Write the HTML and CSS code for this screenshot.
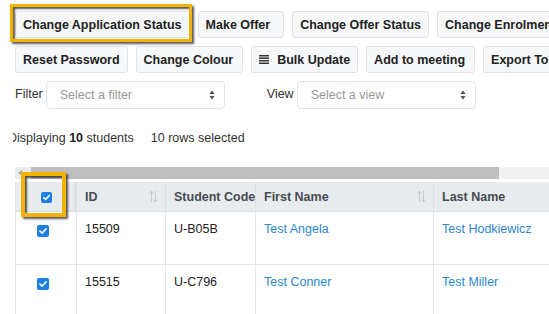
FILE: index.html
```html
<!DOCTYPE html>
<html lang="en">
<head>
<meta charset="utf-8">
<title>Students</title>
<link rel="stylesheet" href="styles.css">
</head>
<body>
<div class="page">
  <div class="toolbar">
    <div class="btn-row">
      <button class="btn btn-focus">Change Application Status<span class="frame frame-btn"></span></button>
      <button class="btn btn-pad-lg">Make Offer</button>
      <button class="btn">Change Offer Status</button>
      <button class="btn">Change Enrolment Status</button>
    </div>
    <div class="btn-row">
      <button class="btn">Reset Password</button>
      <button class="btn btn-pad-sm">Change Colour</button>
      <button class="btn btn-icon">
        <svg class="ico-justify" width="10" height="9" viewBox="0 0 10 9"><rect x="0" y="0" width="10" height="1.5" fill="#333"/><rect x="0" y="2.5" width="10" height="1.5" fill="#333"/><rect x="0" y="5" width="10" height="1.5" fill="#333"/><rect x="0" y="7.5" width="10" height="1.5" fill="#333"/></svg>
        Bulk Update
      </button>
      <button class="btn btn-pad-sm">Add to meeting</button>
      <button class="btn">Export To Excel</button>
    </div>
  </div>

  <div class="filters">
    <div class="field field-filter">
      <span class="field-label">Filter</span>
      <div class="select">
        <span class="placeholder">Select a filter</span>
        <svg class="caret" width="6" height="10" viewBox="0 0 6 10"><path d="M3 0.5 L5.6 4 H0.4 Z M3 9.5 L5.6 6 H0.4 Z" fill="#555"/></svg>
      </div>
    </div>
    <div class="field">
      <span class="field-label">View</span>
      <div class="select">
        <span class="placeholder">Select a view</span>
        <svg class="caret" width="6" height="10" viewBox="0 0 6 10"><path d="M3 0.5 L5.6 4 H0.4 Z M3 9.5 L5.6 6 H0.4 Z" fill="#555"/></svg>
      </div>
    </div>
  </div>

  <div class="summary">
    <div class="summary-clip"><span class="summary-text">Displaying <b>10</b> students</span></div>
    <span class="summary-selected">10 rows selected</span>
  </div>

  <div class="hscroll">
    <span class="hs-btn"><svg width="4" height="6" viewBox="0 0 4 6"><path d="M0 3 L4 0 V6 Z" fill="#a8a8a8"/></svg></span>
    <span class="hs-thumb"></span>
  </div>

  <div class="grid">
    <div class="th th-check">
      <span class="check check-sm"><svg viewBox="0 0 12 12"><path d="M3 6.2 L5.1 8.2 L9 3.9" fill="none" stroke="#fff" stroke-width="1.7" stroke-linecap="round" stroke-linejoin="round"/></svg></span>
      <span class="frame frame-check"></span>
    </div>
    <div class="th">ID<svg class="sort" width="9" height="13" viewBox="0 0 9 13"><path d="M2.5 12 V1.5 M0.5 3.5 L2.5 1.2 L4.5 3.5 M6.5 1 V11.5 M4.5 9.5 L6.5 11.8 L8.5 9.5" fill="none" stroke="#c4c8cc" stroke-width="1"/></svg></div>
    <div class="th">Student Code</div>
    <div class="th">First Name<svg class="sort" width="9" height="13" viewBox="0 0 9 13"><path d="M2.5 12 V1.5 M0.5 3.5 L2.5 1.2 L4.5 3.5 M6.5 1 V11.5 M4.5 9.5 L6.5 11.8 L8.5 9.5" fill="none" stroke="#c4c8cc" stroke-width="1"/></svg></div>
    <div class="th">Last Name</div>

    <div class="td td-check"><span class="check"><svg viewBox="0 0 12 12"><path d="M3 6.2 L5.1 8.2 L9 3.9" fill="none" stroke="#fff" stroke-width="1.7" stroke-linecap="round" stroke-linejoin="round"/></svg></span></div>
    <div class="td">15509</div>
    <div class="td">U-B05B</div>
    <div class="td"><a class="link" href="#">Test Angela</a></div>
    <div class="td"><a class="link" href="#">Test Hodkiewicz</a></div>

    <div class="td td-check"><span class="check"><svg viewBox="0 0 12 12"><path d="M3 6.2 L5.1 8.2 L9 3.9" fill="none" stroke="#fff" stroke-width="1.7" stroke-linecap="round" stroke-linejoin="round"/></svg></span></div>
    <div class="td">15515</div>
    <div class="td">U-C796</div>
    <div class="td"><a class="link" href="#">Test Conner</a></div>
    <div class="td"><a class="link" href="#">Test Miller</a></div>
  </div>
</div>
</body>
</html>
```

FILE: styles.css
```css
* { box-sizing: border-box; }

html, body {
  margin: 0;
  width: 549px;
  height: 314px;
  overflow: hidden;
  background: #fff;
}

body {
  font-family: "Liberation Sans", Arial, sans-serif;
  font-size: 12.5px;
  color: #222;
}

.page {
  padding: 11px 0 0 15px;
}

.toolbar {
  display: flex;
  flex-direction: column;
  gap: 8px;
}

.btn-row {
  display: flex;
  gap: 8px;
  flex-wrap: nowrap;
}

.btn {
  position: relative;
  flex-shrink: 0;
  display: inline-flex;
  align-items: center;
  height: 27px;
  padding: 0 7px;
  border: 1px solid #dfe3e7;
  border-radius: 3px;
  background: #f7f8f9;
  font-family: inherit;
  font-size: 12.5px;
  font-weight: bold;
  color: #222;
  white-space: nowrap;
}

.btn-pad-lg { padding-right: 13px; }
.btn-pad-sm { padding-right: 9px; }

.btn-icon { gap: 8px; }
.ico-justify { display: block; }

.frame {
  position: absolute;
  border: 3px solid #f5b301;
  box-shadow: 2px 2px 2px rgba(0, 0, 0, 0.65), inset 2px 2px 2px rgba(0, 0, 0, 0.65);
  pointer-events: none;
  z-index: 2;
}

.frame-btn {
  left: -6px;
  top: -8px;
  right: -3px;
  bottom: -5px;
}

.frame-check {
  left: 5px;
  top: -10px;
  right: 8px;
  bottom: -6px;
  border-width: 4px;
}

.filters {
  display: flex;
  gap: 42px;
  margin-top: 8px;
}

.field {
  display: flex;
  align-items: center;
  gap: 3px;
}

.field-label {
  color: #333;
  margin-top: -2px;
}

.select {
  position: relative;
  display: flex;
  align-items: center;
  justify-content: space-between;
  width: 179px;
  height: 28px;
  padding: 0 9px 0 13px;
  border: 1px solid #dfe4ea;
  border-radius: 4px;
  background: #fff;
}

.placeholder { color: #9a9a9a; }
.caret { display: block; }

.summary {
  display: flex;
  align-items: center;
  height: 16px;
  margin-top: 21px;
  margin-left: -2px;
  color: #333;
}

.summary-clip {
  overflow: hidden;
  white-space: nowrap;
}

.summary-text {
  display: inline-block;
  margin-left: -5px;
}

.summary-text b { color: #222; }

.summary-selected {
  margin-left: 17px;
}

.hscroll {
  display: flex;
  height: 12px;
  margin-top: 21px;
  background: #f1f1f1;
}

.hs-btn {
  display: flex;
  align-items: center;
  justify-content: center;
  width: 16px;
  padding-right: 6px;
  background: #ececec;
}

.hs-thumb {
  width: 468px;
  background: #bfbfbf;
}

.grid {
  display: grid;
  grid-template-columns: 62px 89px 90px 178px 200px;
  margin-top: 3px;
  width: max-content;
}

.th {
  position: relative;
  display: flex;
  align-items: center;
  justify-content: space-between;
  height: 30px;
  padding: 0 8px;
  background: #e9ecef;
  border-right: 1px solid #dde1e5;
  border-bottom: 1px solid #dde1e5;
  font-weight: bold;
  color: #464c52;
  white-space: nowrap;
}

.th-check,
.td-check {
  justify-content: center;
  border-left: 1px solid #e0e3e7;
  border-right: 3px solid #dde1e5;
}

.sort { display: block; flex-shrink: 0; margin-right: -1px; }

.td {
  display: flex;
  align-items: flex-start;
  height: 53px;
  padding: 9px 8px 0;
  line-height: 16px;
  border-right: 1px solid #e4e7ea;
  border-bottom: 1px solid #e4e7ea;
  color: #222;
  white-space: nowrap;
}

.td-check {
  padding-top: 13px;
  padding-left: 2px;
}

.check {
  display: block;
  width: 12px;
  height: 12px;
  border-radius: 2px;
  background: #1d7fe4;
}

.check svg {
  display: block;
  width: 12px;
  height: 12px;
}

.check-sm {
  width: 11px;
  height: 11px;
  margin-left: 2px;
  margin-top: 1px;
}

.check-sm svg { width: 11px; height: 11px; }

.link {
  color: #2d88cb;
  text-decoration: none;
}
```
